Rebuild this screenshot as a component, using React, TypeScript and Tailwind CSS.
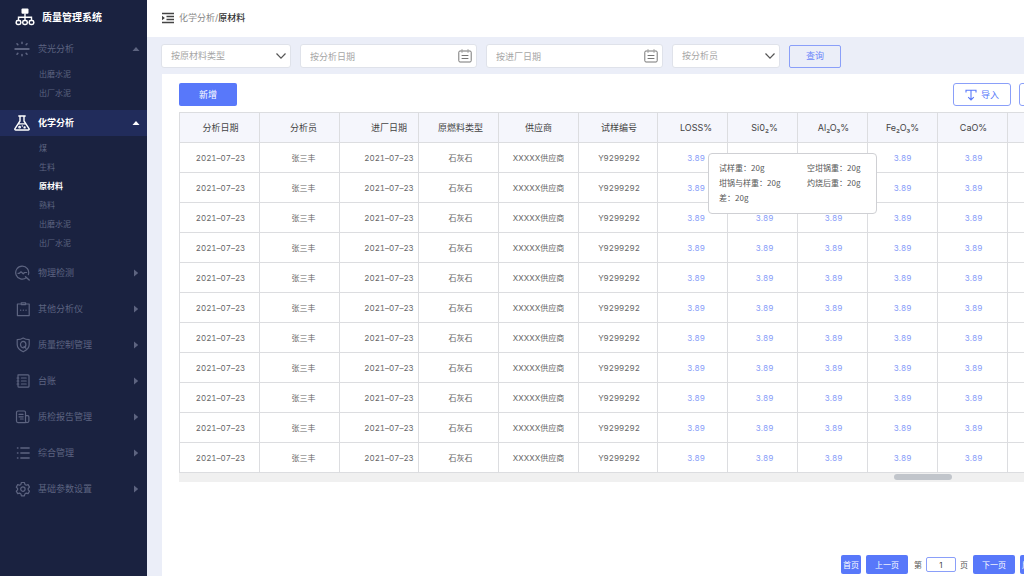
import { useState } from "react";
import type { ReactNode } from "react";
import clsx from "clsx";

interface MenuItem {
    label: string;
    icon: ReactNode;
    children?: string[];
}

const menu: MenuItem[] = [
    { label: "荧光分析", icon: <FluorescenceIcon />, children: ["出磨水泥", "出厂水泥"] },
    { label: "化学分析", icon: <FlaskIcon />, children: ["煤", "生料", "原材料", "熟料", "出磨水泥", "出厂水泥"] },
    { label: "物理检测", icon: <PulseIcon /> },
    { label: "其他分析仪", icon: <ClipboardIcon /> },
    { label: "质量控制管理", icon: <ShieldIcon /> },
    { label: "台账", icon: <LedgerIcon /> },
    { label: "质检报告管理", icon: <ReportIcon /> },
    { label: "综合管理", icon: <ListIcon /> },
    { label: "基础参数设置", icon: <GearIcon /> },
];

const columns = [
    { key: "date", title: "分析日期", col: "w-[80px]", pad: "pl-[2px]", cell: "text-[#666]" },
    { key: "analyst", title: "分析员", col: "w-[80px]", pad: "pl-[8px]", cell: "text-[#666]" },
    { key: "arrival", title: "进厂日期", col: "w-[79px]", pad: "pl-[20px]", cell: "text-[#666]" },
    { key: "material", title: "原燃料类型", col: "w-[80px]", pad: "pl-[4px]", cell: "text-[#666]" },
    { key: "supplier", title: "供应商", col: "w-[80px]", pad: "", cell: "text-[#666]" },
    { key: "sample", title: "试样编号", col: "w-[79px]", pad: "pl-[2px]", cell: "text-[#666]" },
    { key: "loss", title: "LOSS%", col: "w-[70px]", pad: "pl-[7px]", cell: "text-[#869bf8]" },
    { key: "sio2", title: "Si0₂%", col: "w-[70px]", pad: "pl-[4px]", cell: "text-[#869bf8]" },
    { key: "al2o3", title: "Al₂O₃%", col: "w-[70px]", pad: "pl-[2px]", cell: "text-[#869bf8]" },
    { key: "fe2o3", title: "Fe₂O₃%", col: "w-[70px]", pad: "", cell: "text-[#869bf8]" },
    { key: "cao", title: "CaO%", col: "w-[70px]", pad: "pl-[2px]", cell: "text-[#869bf8]" },
    { key: "mgo", title: "MgO%", col: "w-[70px]", pad: "pl-[4px]", cell: "text-[#869bf8]" },
];

const record: Record<string, string> = {
    date: "2021–07–23",
    analyst: "张三丰",
    arrival: "2021–07–23",
    material: "石灰石",
    supplier: "XXXXX供应商",
    sample: "Y9299292",
    loss: "3.89",
    sio2: "3.89",
    al2o3: "3.89",
    fe2o3: "3.89",
    cao: "3.89",
    mgo: "3.89",
};

const rows = Array.from({ length: 11 }, (_, i) => ({ id: i, ...record }) as Record<string, string | number>);

const details = [
    ["试样重", "20g"],
    ["空坩锅重", "20g"],
    ["坩锅与样重", "20g"],
    ["灼烧后重", "20g"],
    ["差", "20g"],
];

function Icon({ children }: { children: ReactNode }) {
    return (
        <svg
            className="w-4 h-4 shrink-0"
            viewBox="0 0 16 16"
            fill="none"
            stroke="currentColor"
            strokeWidth="1.2"
            strokeLinecap="round"
            strokeLinejoin="round"
            aria-hidden="true"
        >
            {children}
        </svg>
    );
}

function FluorescenceIcon() {
    return (
        <Icon>
            <path d="M1.2 8h13.6" strokeWidth="1.8" />
            <path d="M8 1.300v1.200M8 13.500v1.200M3 2.800l.8.8M13 2.800l-.8.8M3 13.200l.8-.8M13 13.200l-.8-.8" strokeWidth="1.6" />
        </Icon>
    );
}

function FlaskIcon() {
    return (
        <Icon>
            <path d="M4.800 1h6.400M6 1v5L1 13.600c-.4.8 0 1.400.8 1.400h12.400c.8 0 1.200-.6.8-1.400L10 6V1" strokeWidth="1.4" />
            <path d="M4.600 8.800h6.800" strokeWidth="1.2" />
            <circle cx="5.6" cy="12.2" r="0.8" />
            <circle cx="10.6" cy="12.4" r="0.6" />
            <path d="M8.300 11v.1" strokeWidth="1.4" />
        </Icon>
    );
}

function PulseIcon() {
    return (
        <Icon>
            <path d="M12.400 12.600a6.500 6.500 0 1 1 2-3" />
            <path d="M11.500 11.800l3.700 3.200" strokeWidth="1.4" />
            <path d="M4 8.300h1.400L7 6.800l2.200 2 1.400-1.300h2" />
        </Icon>
    );
}

function ClipboardIcon() {
    return (
        <Icon>
            <path d="M6.400 3H3.400v11.600h11.800V3h-3.200" />
            <path d="M7.200 3.600V1.800h4.400v1.800z" />
            <path d="M6.600 9.200h.1M9.300 9.200h.1M12 9.200h.1" strokeWidth="1.3" />
        </Icon>
    );
}

function ShieldIcon() {
    return (
        <Icon>
            <path d="M9.200 1c1.800 1.200 3.800 1.600 6 1.600v5c0 3.600-2.400 5.600-6 7.200-3.600-1.600-6-3.600-6-7.200v-5C5.400 2.600 7.400 2.200 9.200 1z" />
            <ellipse cx="9.2" cy="7.6" rx="2.7" ry="3.2" />
            <path d="M10 9.400l2 2" />
        </Icon>
    );
}

function LedgerIcon() {
    return (
        <Icon>
            <path d="M4 1.800h10c.6 0 1 .4 1 1v10.400c0 .6-.4 1-1 1H5c-.6 0-1-.4-1-1z" />
            <path d="M3 5h1.800M3 8h1.800M3 11h1.800M7.400 5h4.800M7.400 8h4.800M7.400 11h4.800" />
        </Icon>
    );
}

function ReportIcon() {
    return (
        <Icon>
            <path d="M11.500 13.600H4c-1 0-1.500-.6-1.500-1.500V3.500C2.500 2.600 3 2 4 2h6.200c.8 0 1.300.6 1.300 1.500v8.600c0 .9.600 1.500 1.500 1.500s1.900-.6 1.900-1.500V8c0-.8-.5-1.300-1.300-1.300h-2" />
            <path d="M5 5.400h4M5 7.800h4.200M6.400 10h2.800" />
        </Icon>
    );
}

function ListIcon() {
    return (
        <Icon>
            <path d="M3.400 3h.6M3.400 8h.6M3.400 13h.6M6.800 3h8.400M6.800 8h8.400M6.800 13h8.400" strokeWidth="1.3" />
        </Icon>
    );
}

function GearIcon() {
    return (
        <Icon>
            <path d="M7.400 1.500h3l.5 1.900 1.300.8 1.900-.6 1.400 2.600-1.300 1.300v1.300l1.300 1.300-1.400 2.500-1.900-.5-1.300.8-.5 1.900h-3l-.5-1.900-1.300-.8-1.900.5-1.400-2.500 1.300-1.300V7.500L2.300 6.200l1.400-2.600 1.900.6 1.300-.8z" />
            <circle cx="8.9" cy="8.1" r="2.2" />
        </Icon>
    );
}

function LogoIcon() {
    return (
        <svg className="w-5 h-[18px] shrink-0" viewBox="0 0 20 18" fill="none" stroke="currentColor" aria-hidden="true">
            <rect x="6.5" y="0.5" width="7" height="5.2" rx="1" fill="currentColor" stroke="none" />
            <path d="M10 5.500V12M3.500 12V9.200h13V12" strokeWidth="1.4" />
            <rect x="1.2" y="12.6" width="4.6" height="3.8" rx="1.7" strokeWidth="1.5" />
            <rect x="7.7" y="12.6" width="4.6" height="3.8" rx="1.7" strokeWidth="1.5" />
            <rect x="14.2" y="12.6" width="4.6" height="3.8" rx="1.7" strokeWidth="1.5" />
        </svg>
    );
}

function Caret({ open }: { open: boolean }) {
    return (
        <svg className="w-2 h-2 ml-auto shrink-0" viewBox="0 0 8 8" fill="currentColor" aria-hidden="true">
            <path d={open ? "M0.500 6L4 2l3.500 4z" : "M2 0.500L6.200 4 2 7.500z"} />
        </svg>
    );
}

function Sidebar() {
    const [active, setActive] = useState("化学分析");

    return (
        <aside className="w-[147px] shrink-0 bg-[#1a2240] text-[#5d6480]">
            <div className="flex items-center gap-[7px] h-9 pl-[15px] pb-[2px] text-white">
                <LogoIcon />
                <h1 className="text-[10px] font-bold">质量管理系统</h1>
            </div>
            <nav>
                {menu.map((item) => (
                    <div key={item.label} className={item.children ? "" : "mb-[10px]"}>
                        <button
                            type="button"
                            onClick={() => setActive(item.label)}
                            className={clsx(
                                "flex items-center gap-2 w-full h-[26px] pl-[14px] pr-[7px] text-[9px]",
                                item.label === active && "bg-[#212c5b] text-white font-bold"
                            )}
                        >
                            {item.icon}
                            {item.label}
                            <Caret open={!!item.children} />
                        </button>
                        {item.children && (
                            <ul className="pt-[2px] pb-[8px]">
                                {item.children.map((child) => (
                                    <li key={child}>
                                        <a
                                            href="#"
                                            className={clsx(
                                                "flex items-center h-[19px] pl-[39px] text-[8px]",
                                                child === "原材料" && "text-white font-bold"
                                            )}
                                        >
                                            {child}
                                        </a>
                                    </li>
                                ))}
                            </ul>
                        )}
                    </div>
                ))}
            </nav>
        </aside>
    );
}

function FilterSelect({ label, className }: { label: string; className: string }) {
    return (
        <div className={clsx("relative shrink-0", className)}>
            <select
                aria-label={label}
                className="block w-full h-6 pl-[9px] pr-6 appearance-none rounded-[3px] border border-[#dfe2ea] bg-white text-[9px] text-[#a6a6a6]"
            >
                <option>{label}</option>
            </select>
            <svg
                className="absolute right-[5px] top-[7px] w-[10px] h-[10px] pointer-events-none"
                viewBox="0 0 10 10"
                fill="none"
                stroke="#555"
                strokeWidth="1.2"
                aria-hidden="true"
            >
                <path d="M0.500 2.500L5 7.200l4.500-4.700" />
            </svg>
        </div>
    );
}

function FilterDate({ label }: { label: string }) {
    return (
        <div className="relative w-[177px] shrink-0">
            <input
                type="text"
                aria-label={label}
                placeholder={label}
                className="block w-full h-6 pl-[9px] pr-7 rounded-[3px] border border-[#dfe2ea] bg-white text-[9px] placeholder:text-[#a6a6a6]"
            />
            <svg
                className="absolute right-[5px] top-[5px] w-[14px] h-[14px] pointer-events-none"
                viewBox="0 0 14 14"
                fill="none"
                stroke="#777"
                strokeLinecap="round"
                aria-hidden="true"
            >
                <path d="M3 2H2C1.200 2 .8 2.400.8 3.200v8.600c0 .8.400 1.200 1.200 1.200h10c.8 0 1.200-.4 1.200-1.200V3.200c0-.8-.4-1.200-1.200-1.200h-1M5 2h4M4 .8v2.400M10 .8v2.400M4 6.500h6M4 9.500h6" />
            </svg>
        </div>
    );
}

function Toolbar() {
    const outline =
        "flex items-center justify-center gap-1 w-[58px] h-[23px] rounded-[3px] border border-[#8a9ff9] bg-white text-[9px] text-[#5878fa]";

    return (
        <div className="flex items-center gap-2">
            <button type="button" className="w-[58px] h-[23px] mr-auto rounded-[2px] bg-[#5878fa] text-[9px] text-white">
                新增
            </button>
            <button type="button" className={outline}>
                <svg className="w-3 h-3" viewBox="0 0 12 12" fill="none" stroke="currentColor" strokeWidth="1.1" aria-hidden="true">
                    <path d="M1 3.600V1.200h10v2.400M6 1.200v9.600M3.200 8.200L6 11l2.800-2.800" />
                </svg>
                导入
            </button>
            <button type="button" className={outline}>
                <svg className="w-3 h-3" viewBox="0 0 12 12" fill="none" stroke="currentColor" strokeWidth="1.1" aria-hidden="true">
                    <path d="M1 8.400v2.400h10V8.400M6 10.800V1.200M3.200 4L6 1.200 8.800 4" />
                </svg>
                导出
            </button>
        </div>
    );
}

function DetailTooltip() {
    return (
        <div
            role="tooltip"
            className="absolute left-[529px] top-[41px] w-[169px] px-[10px] pt-[6px] pb-[8px] grid grid-cols-[88px_1fr] rounded-[4px] border border-[#cfd0d4] bg-white font-['Noto_Sans_CJK_SC',sans-serif] text-[8px] leading-[15px] text-[#555]"
        >
            {details.map(([name, value]) => (
                <span key={name}>
                    {name}：{value}
                </span>
            ))}
        </div>
    );
}

function DataTable() {
    return (
        <div className="relative mt-[6px]">
            <table className="w-full table-fixed border-collapse border border-[#dcdde0] text-center tabular-nums">
                <colgroup>
                    {columns.map((c) => (
                        <col key={c.key} className={c.col} />
                    ))}
                </colgroup>
                <thead>
                    <tr className="h-[30px] bg-[#f5f6fc] text-[9px] text-[#444]">
                        {columns.map((c) => (
                            <th key={c.key} className={clsx("p-0 border border-[#dcdde0] font-normal", c.pad)}>
                                {c.title}
                            </th>
                        ))}
                    </tr>
                </thead>
                <tbody>
                    {rows.map((row) => (
                        <tr key={row.id} className="h-[30px] text-[8px]">
                            {columns.map((c) => (
                                <td key={c.key} className={clsx("p-0 border border-[#dcdde0]", c.pad, c.cell)}>
                                    {row[c.key]}
                                </td>
                            ))}
                        </tr>
                    ))}
                </tbody>
            </table>
            {/* Horizontal scroll track */}
            <div className="h-[9px] py-[1px] bg-[#f0f0f0]">
                <div className="w-[58px] h-[6px] ml-[715px] rounded-full bg-[#c1c5cb]" />
            </div>
            <DetailTooltip />
        </div>
    );
}

function Pagination() {
    const button = "h-[19px] rounded-[2px] bg-[#5878fa] text-[8px] text-white";

    return (
        <div className="flex items-center justify-end gap-[5px] mt-auto pr-[37px] pb-[2px] text-[8px] text-[#555]">
            <button type="button" className={clsx(button, "w-5")}>首页</button>
            <button type="button" className={clsx(button, "w-[42px]")}>上一页</button>
            <label className="flex items-center gap-1 pl-[1px]">
                第
                <input
                    type="text"
                    defaultValue="1"
                    aria-label="页码"
                    className="w-[30px] h-[15px] rounded-[2px] border border-[#8a9ff9] bg-white text-center text-[8px] text-[#444]"
                />
                页
            </label>
            <button type="button" className={clsx(button, "w-[42px]")}>下一页</button>
            <button type="button" className={clsx(button, "w-5")}>尾页</button>
        </div>
    );
}

export default function App() {
    return (
        <div className="flex min-h-screen overflow-hidden bg-[#ebeef8] font-['Inter','Noto_Sans_CJK_SC',sans-serif]">
            <Sidebar />
            <main className="flex-1 min-w-0 flex flex-col overflow-hidden">
                {/* Breadcrumb */}
                <header className="flex items-center gap-[5px] h-[37px] pl-[15px] pb-[2px] bg-white text-[9px] text-[#888]">
                    <svg className="w-3 h-3" viewBox="0 0 12 12" fill="none" stroke="#444" strokeWidth="1.3" aria-hidden="true">
                        <path d="M0 1.500h12M4.500 4.500H12M4.500 7.500H12M0 10.500h12" />
                        <path d="M0 3.800L2.900 6 0 8.200z" fill="#444" stroke="none" />
                    </svg>
                    <p>
                        化学分析/<span className="font-medium text-[#333]">原材料</span>
                    </p>
                </header>

                {/* Filters */}
                <form className="flex items-center gap-[9px] pl-[14px] pt-[7px] pb-[6px]">
                    <FilterSelect label="按原材料类型" className="w-[130px]" />
                    <FilterDate label="按分析日期" />
                    <FilterDate label="按进厂日期" />
                    <FilterSelect label="按分析员" className="w-[108px]" />
                    <button
                        type="button"
                        className="w-[52px] h-[23px] rounded-[2px] border border-[#8a9ff9] text-[9px] text-[#6c87fa]"
                    >
                        查询
                    </button>
                </form>

                {/* Records */}
                <section className="flex-1 flex flex-col min-w-[932px] ml-[15px] px-[17px] pt-[9px] bg-white">
                    <Toolbar />
                    <DataTable />
                    <Pagination />
                </section>
            </main>
        </div>
    );
}
